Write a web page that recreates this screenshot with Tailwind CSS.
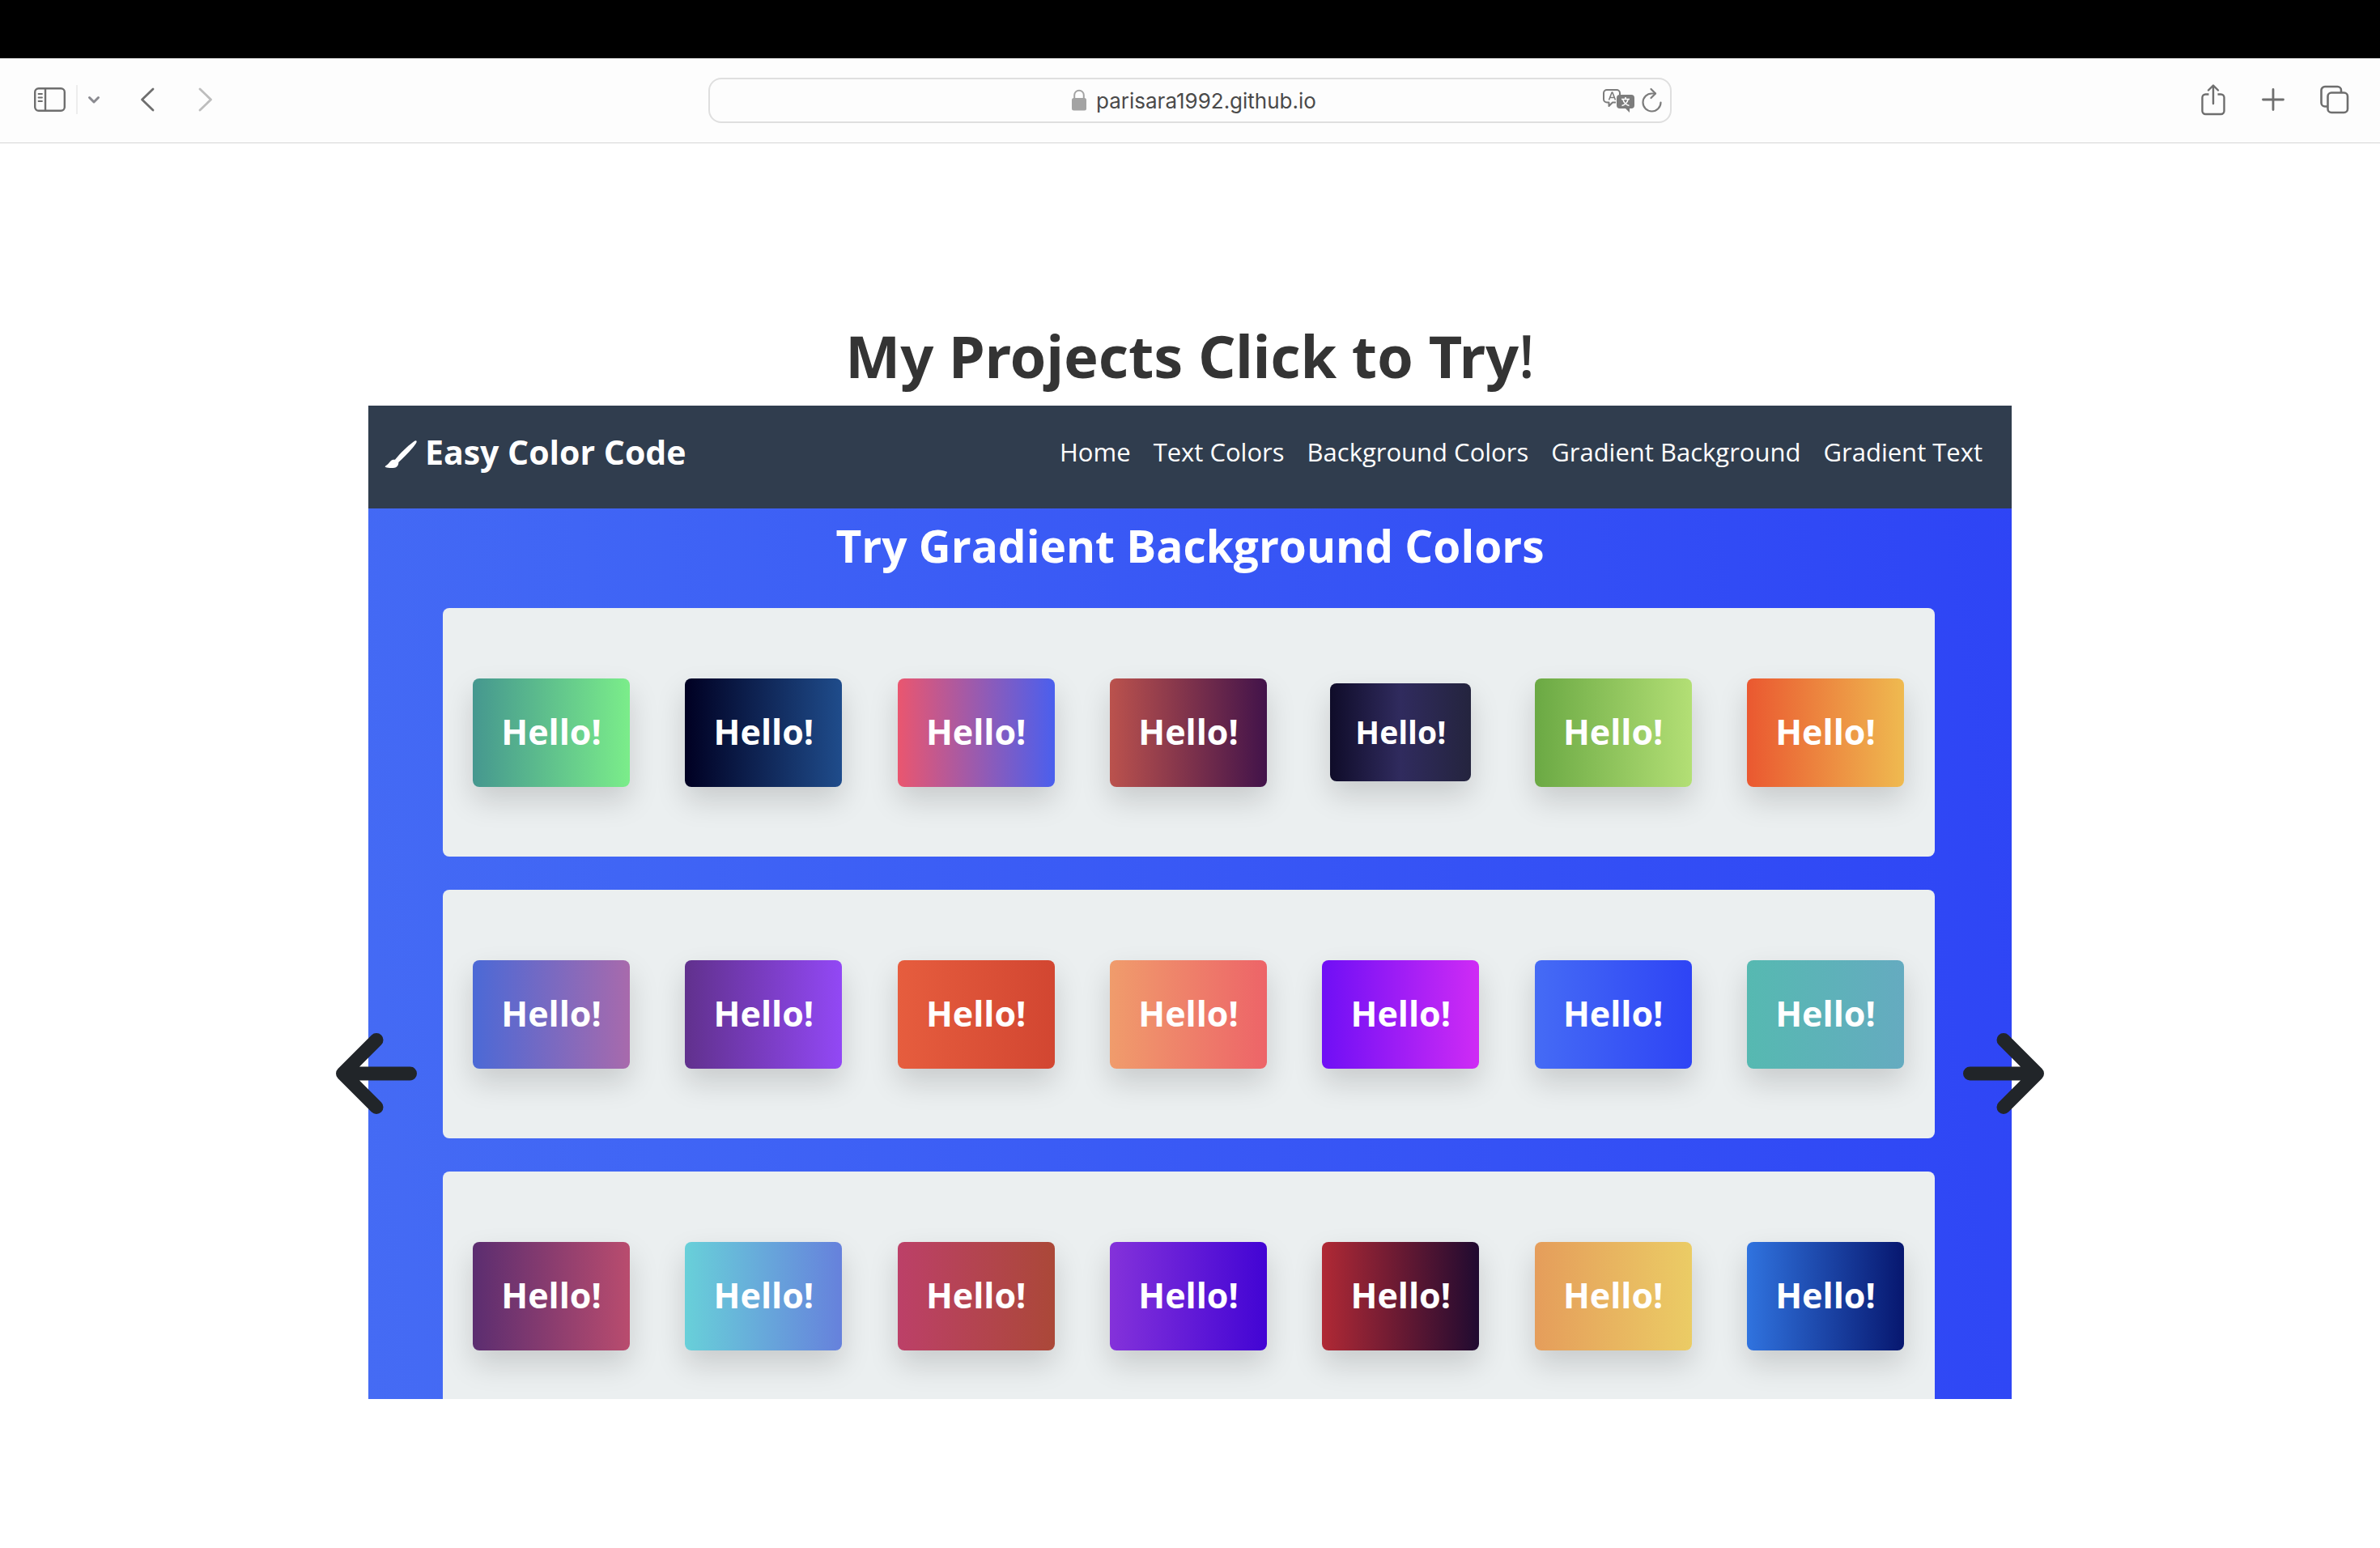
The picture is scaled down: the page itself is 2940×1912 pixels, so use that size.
<!DOCTYPE html>
<html lang="en">
<head>
<meta charset="utf-8">
<meta name="viewport" content="width=device-width, initial-scale=1">
<title>My Projects</title>
<script src="https://cdn.jsdelivr.net/npm/@tailwindcss/browser@4"></script>
</head>
<body class="min-h-screen bg-white font-['Open_Sans',sans-serif]">
<div class="h-[72px] bg-black"></div>

<!-- Browser toolbar -->
<header class="flex h-[105px] items-center justify-between border-b border-[#d6d6d6] bg-[#fdfdfd] px-[38px] pb-0.5 text-[#6e6e6e]">
  <div class="flex flex-1 items-center">
    <button aria-label="Show sidebar" class="px-1"><svg class="h-8 w-10" viewBox="0 0 40 32" fill="none" stroke="currentColor" stroke-width="2.4"><rect x="1.200" y="2.200" width="36.600" height="27.600" rx="4.500"/><path d="M14 2v28"/><path d="M5.500 9h4.500M5.500 13.500h4.500M5.500 18h4.500" stroke-width="1.800" stroke-linecap="round"/></svg></button>
    <div class="ml-2 h-9 w-[2px] bg-[#ededed]"></div>
    <button aria-label="Tab groups" class="ml-3"><svg class="h-4 w-4" viewBox="0 0 16 16" fill="none" stroke="#8a8a90" stroke-width="3" stroke-linecap="round" stroke-linejoin="round"><path d="M2.500 5.500 8 11l5.500-5.500"/></svg></button>
    <button aria-label="Back" class="ml-12"><svg class="h-8 w-5" viewBox="0 0 20 32" fill="none" stroke="currentColor" stroke-width="2.800" stroke-linecap="round" stroke-linejoin="round"><path d="M17 3 3.500 16 17 29"/></svg></button>
    <button aria-label="Forward" class="ml-[52px] text-[#bdbdbd]"><svg class="h-8 w-5" viewBox="0 0 20 32" fill="none" stroke="currentColor" stroke-width="2.800" stroke-linecap="round" stroke-linejoin="round"><path d="M3 3 16.500 16 3 29"/></svg></button>
  </div>
  <div class="mt-0.5 flex h-14 w-[1190px] items-center rounded-2xl border-2 border-[#dfdfdf] pr-2 pl-3">
    <div class="w-[84px]"></div>
    <div class="flex flex-1 items-center justify-center gap-3">
      <svg class="h-7 w-[18px]" viewBox="0 0 18 28" fill="#a3a3a3"><rect y="11" width="18" height="15.500" rx="2.500"/><path d="M3.200 12V7.500a5.800 5.800 0 0 1 11.600 0V12" fill="none" stroke="#a3a3a3" stroke-width="2"/></svg>
      <input aria-label="Address" value="parisara1992.github.io" class="w-[274px] bg-transparent font-['Inter',sans-serif] text-[26px] text-[#4a4a4a] outline-none">
    </div>
    <div class="flex items-center gap-2 text-[#7c7c7c]">
      <button aria-label="Translate"><svg class="h-8 w-10" viewBox="0 0 40 32" fill="none" stroke="currentColor" stroke-width="2" stroke-linejoin="round"><path d="M17 18.500h-4L8.500 23v-4.500H6A4 4 0 0 1 2 14.500V7A4 4 0 0 1 6 3h12a4 4 0 0 1 4 4v2"/><path d="m8.500 15.500 3.700-9.500h.6l3.700 9.500M9.700 12.500h5.600" stroke-width="1.600"/><path d="M22 9h14a4 4 0 0 1 4 4v9a4 4 0 0 1-4 4h-2v5l-5-5h-7a4 4 0 0 1-4-4v-9a4 4 0 0 1 4-4Z" fill="currentColor" stroke="none"/><path d="M24 14.500h10M29 12v2.500M32 15c-.6 3-3.500 6.500-7.500 7.500M26 15c.6 3 3.500 6.500 7.500 7.500" stroke="#fff" stroke-width="1.600"/></svg></button>
      <button aria-label="Reload"><svg class="h-8 w-7" viewBox="0 0 28 32" fill="none" stroke="currentColor" stroke-width="2.200" stroke-linecap="round" stroke-linejoin="round"><path d="M24.500 18.500a11 11 0 1 1-11-11h4.500"/><path d="m12.500 2 5.500 5.500-5.500 5.500"/></svg></button>
    </div>
  </div>
  <div class="flex flex-1 items-center justify-end gap-11">
    <button aria-label="Share"><svg class="h-10 w-8" viewBox="0 0 32 40" fill="none" stroke="currentColor" stroke-width="2.400" stroke-linecap="round" stroke-linejoin="round"><path d="M10.500 13.500H6.500a4 4 0 0 0-4 4V34a4 4 0 0 0 4 4h19a4 4 0 0 0 4-4V17.500a4 4 0 0 0-4-4h-4" stroke-linecap="butt"/><path d="M16 25V3M10 8.500 16 2.500l6 6"/></svg></button>
    <button aria-label="New tab"><svg class="h-7 w-7" viewBox="0 0 28 28" fill="none" stroke="currentColor" stroke-width="2.800" stroke-linecap="round"><path d="M14 1.500v25M1.500 14h25"/></svg></button>
    <button aria-label="Show all tabs"><svg class="h-9 w-9" viewBox="0 0 36 36" fill="none" stroke="currentColor" stroke-width="2.600"><rect x="9.500" y="9.500" width="24.500" height="24.500" rx="4.500"/><path d="M9.500 26.500H6A4.500 4.500 0 0 1 1.500 22V6.500A4.500 4.500 0 0 1 6 2h15.500A4.500 4.500 0 0 1 26 6.500v3"/></svg></button>
  </div>
</header>

<main class="px-[455px] pt-[214px]">
  <h1 class="h-[110px] text-center font-['Noto_Sans','Open_Sans',sans-serif] text-[72px] leading-[96px] font-bold text-[#343434]">My Projects Click to Try<span class="font-medium">!</span></h1>

  <div class="relative">
    <section class="aspect-[2030/1227] overflow-hidden bg-[linear-gradient(83deg,#456bf4,#4065f5_18%,#3049f5_88%,#2e44f5)] text-white">
      <nav class="flex h-[127px] items-center justify-between bg-[#303d4e] pr-9 pb-3 pl-5">
        <a href="#" class="flex items-center gap-2.5 text-[41px] font-bold">
          <svg class="mt-1 h-9 w-10" viewBox="0 0 40 36" fill="#fff"><path d="M39 1.300c1 .5.900 2-.2 3.500C33 13 24 22 17.300 28c.2 2.500-1.500 6.200-5 6.800-3.500.4-8.300.3-11-.9-.8-.4-.8-1 0-1.500C4.500 31 5.500 28 8 26c1.500-1.300 3.500-1.600 5-1.200C19.500 16.500 29.500 7 37 1.800c.8-.5 1.500-.7 2-.5Z"/></svg>
          Easy Color Code</a>
        <div class="flex gap-7 text-[31px]">
          <a href="#">Home</a><a href="#">Text Colors</a><a href="#">Background Colors</a><a href="#">Gradient Background</a><a href="#">Gradient Text</a>
        </div>
      </nav>
      <h2 class="h-[123px] pt-2 text-center text-[55px] leading-[76px] font-bold">Try Gradient Background Colors</h2>
      <div id="rows" class="flex flex-col gap-[41px] pr-[95px] pl-[92px]"></div>
    </section>

    <button aria-label="Previous project" class="absolute top-[775px] -left-10"><svg class="h-[100px] w-[100px]" viewBox="0 0 100 100" fill="none" stroke="#212529" stroke-width="17" stroke-linecap="round" stroke-linejoin="round"><path d="M50 8.500 8.500 50 50 91.500M8.500 50h83"/></svg></button>
    <button aria-label="Next project" class="absolute top-[775px] -right-10"><svg class="h-[100px] w-[100px]" viewBox="0 0 100 100" fill="none" stroke="#212529" stroke-width="17" stroke-linecap="round" stroke-linejoin="round"><path d="M50 8.500 91.500 50 50 91.500M91.500 50h-83"/></svg></button>
  </div>
</main>

<script>
  const rows = [
    ['#45978f,#7bed8a', '#000022,#1f4c8b', '#ea566f,#4a5fee', '#bb524d,#42134a', '#0f0c29,#302b5e,#24243e', '#6ba944,#b3df75', '#ea5830,#efba50'],
    ['#4b69d6,#a86aac', '#61318d,#9248f5', '#e65d3e,#d24631', '#f09c6c,#ed6468', '#6f0ff5,#cf2bf5', '#456bf5,#2e44f5', '#56b9b1,#65abc0'],
    ['#5b2d70,#b94c6e', '#68d0d9,#6681dc', '#bc4068,#ab4838', '#8432da,#4204d4', '#b02935,#200a30', '#e59d5b,#ebcc65', '#3073df,#07176f']
  ];
  const tile = (colors, r, c) => {
    const pressed = r === 0 && c === 4;
    const size = pressed ? 'h-[121px] w-[174px] text-[39px]' : 'h-[134px] w-[194px] text-[43px]';
    return `<div class="flex w-[194px] justify-center"><button class="${size} rounded-lg font-bold shadow-[0_17px_36px_rgba(0,0,0,0.15)]" style="background-image:linear-gradient(90deg,${colors})">Hello!</button></div>`;
  };
  document.getElementById('rows').innerHTML = rows.map((row, r) =>
    `<div class="flex h-[307px] shrink-0 items-center justify-between rounded-lg bg-[#ebeff0] pr-[38px] pl-[37px]">${row.map((g, c) => tile(g, r, c)).join('')}</div>`).join('');
</script>
</body>
</html>
